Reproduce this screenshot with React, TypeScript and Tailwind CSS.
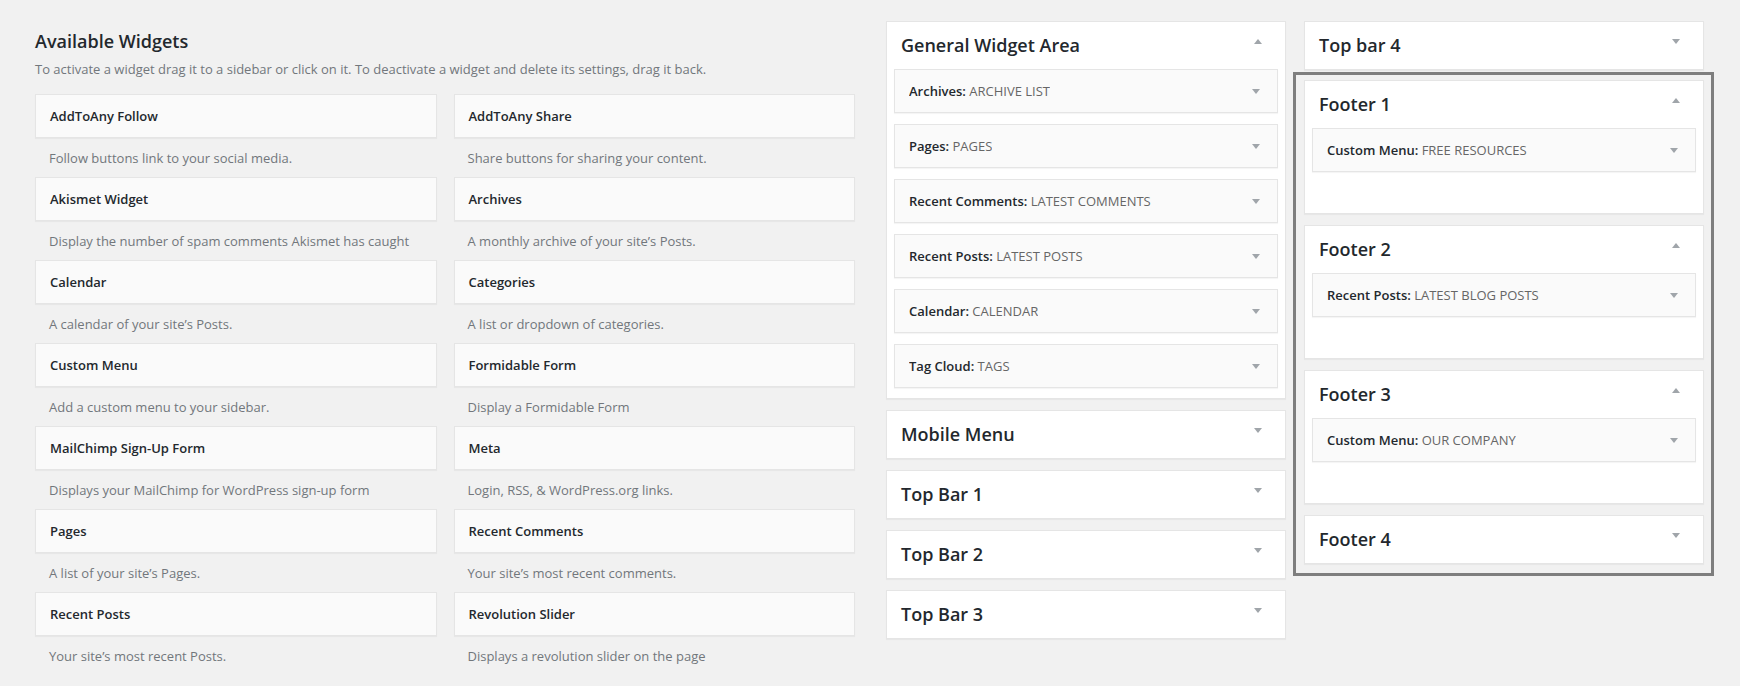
import React from "react";

type Widget = { name: string; desc: string };

const available: Widget[] = [
  { name: "AddToAny Follow", desc: "Follow buttons link to your social media." },
  { name: "AddToAny Share", desc: "Share buttons for sharing your content." },
  { name: "Akismet Widget", desc: "Display the number of spam comments Akismet has caught" },
  { name: "Archives", desc: "A monthly archive of your site’s Posts." },
  { name: "Calendar", desc: "A calendar of your site’s Posts." },
  { name: "Categories", desc: "A list or dropdown of categories." },
  { name: "Custom Menu", desc: "Add a custom menu to your sidebar." },
  { name: "Formidable Form", desc: "Display a Formidable Form" },
  { name: "MailChimp Sign-Up Form", desc: "Displays your MailChimp for WordPress sign-up form" },
  { name: "Meta", desc: "Login, RSS, & WordPress.org links." },
  { name: "Pages", desc: "A list of your site’s Pages." },
  { name: "Recent Comments", desc: "Your site’s most recent comments." },
  { name: "Recent Posts", desc: "Your site’s most recent Posts." },
  { name: "Revolution Slider", desc: "Displays a revolution slider on the page" },
];

type Placed = { type: string; title: string };

function Arrow({ up = false, className = "" }: { up?: boolean; className?: string }) {
  return (
    <svg width="8" height="5" viewBox="0 0 8 5" className={"shrink-0 " + className}>
      <polygon points={up ? "0,5 8,5 4,0" : "0,0 8,0 4,5"} fill="#a0a5aa" />
    </svg>
  );
}

function PlacedWidget({ w }: { w: Placed }) {
  return (
    <div className="flex h-[44px] items-center justify-between border border-[#e5e5e5] bg-[#fafafa] pl-[14px] pr-[17px] pt-[2px] text-[13px] shadow-[0_1px_1px_rgba(0,0,0,0.04)]">
      <div className="truncate">
        <span className="font-semibold text-[#23282d]">{w.type}:</span>{" "}
        <span className="text-[#666]">{w.title}</span>
      </div>
      <Arrow className="-mt-[2px]" />
    </div>
  );
}

function Sidebar({
  name,
  widgets,
  pb = "pb-[10px]",
}: {
  name: string;
  widgets?: Placed[];
  pb?: string;
}) {
  const open = !!widgets;
  return (
    <div className="border border-[#e5e5e5] bg-white shadow-[0_1px_1px_rgba(0,0,0,0.04)]">
      <div className="flex items-start justify-between pb-[12px] pl-[14px] pr-[23px] pt-[11px]">
        <h2 className="text-[18px] font-semibold leading-[24px] text-[#23282d]">{name}</h2>
        <Arrow up={open} className="mt-[6px]" />
      </div>
      {open && (
        <div className={"flex flex-col gap-[11px] px-[7px] " + pb}>
          {widgets!.map((w) => (
            <PlacedWidget key={w.type + w.title} w={w} />
          ))}
        </div>
      )}
    </div>
  );
}

export default function App() {
  return (
    <div className="flex h-[686px] w-[1740px] overflow-hidden bg-[#f1f1f1] pl-[35px] font-['Open_Sans',sans-serif]">
      {/* available widgets */}
      <div className="w-[820px] pt-[29px]">
        <h2 className="mb-[7px] text-[18px] font-semibold leading-[24px] text-[#23282d]">
          Available Widgets
        </h2>
        <p className="mb-[16px] text-[13px] leading-[18px] text-[#72777c]">
          To activate a widget drag it to a sidebar or click on it. To deactivate a widget and
          delete its settings, drag it back.
        </p>
        <div className="grid grid-cols-2 gap-x-[17px]">
          {available.map((w) => (
            <div key={w.name}>
              <div className="flex h-[44px] items-center border border-[#e5e5e5] bg-[#fafafa] px-[14px] pt-[2px] text-[13px] font-semibold text-[#23282d] shadow-[0_1px_1px_rgba(0,0,0,0.04)]">
                {w.name}
              </div>
              <div className="pb-[10px] pl-[14px] pt-[11px] text-[13px] leading-[18px] text-[#72777c]">
                {w.desc}
              </div>
            </div>
          ))}
        </div>
      </div>

      {/* middle sidebars */}
      <div className="ml-[31px] flex w-[400px] flex-col gap-[11px] pt-[21px]">
        <Sidebar
          name="General Widget Area"
          widgets={[
            { type: "Archives", title: "ARCHIVE LIST" },
            { type: "Pages", title: "PAGES" },
            { type: "Recent Comments", title: "LATEST COMMENTS" },
            { type: "Recent Posts", title: "LATEST POSTS" },
            { type: "Calendar", title: "CALENDAR" },
            { type: "Tag Cloud", title: "TAGS" },
          ]}
        />
        <Sidebar name="Mobile Menu" />
        <Sidebar name="Top Bar 1" />
        <Sidebar name="Top Bar 2" />
        <Sidebar name="Top Bar 3" />
      </div>

      {/* right sidebars */}
      <div className="ml-[7px] w-[421px] pt-[21px]">
        <div className="ml-[11px] w-[400px]">
          <Sidebar name="Top bar 4" />
        </div>
        <div className="mt-[2px] flex flex-col gap-[11px] border-[3px] border-[#7e7e7e] pb-[9px] pl-[8px] pr-[7px] pt-[5px]">
          <Sidebar
            name="Footer 1"
            pb="pb-[41px]"
            widgets={[{ type: "Custom Menu", title: "FREE RESOURCES" }]}
          />
          <Sidebar
            name="Footer 2"
            pb="pb-[41px]"
            widgets={[{ type: "Recent Posts", title: "LATEST BLOG POSTS" }]}
          />
          <Sidebar
            name="Footer 3"
            pb="pb-[41px]"
            widgets={[{ type: "Custom Menu", title: "OUR COMPANY" }]}
          />
          <Sidebar name="Footer 4" />
        </div>
      </div>
    </div>
  );
}
